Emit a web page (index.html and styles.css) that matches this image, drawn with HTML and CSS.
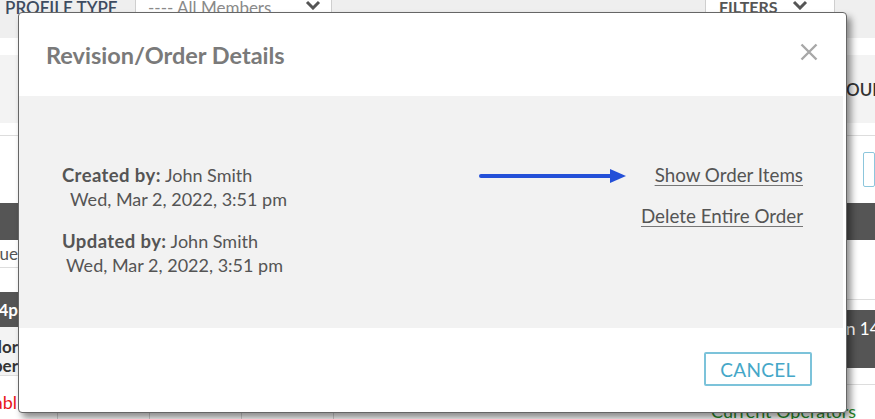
FILE: index.html
```html
<!DOCTYPE html>
<html lang="en">
<head>
    <meta charset="UTF-8">
    <meta name="viewport" content="width=device-width, initial-scale=1.0">
    <title>Revision/Order Details</title>
    <link rel="stylesheet" href="styles.css">
</head>
<body>
    <!-- page behind the dialog -->
    <div class="page">
        <div class="topbar">
            <span class="label">PROFILE TYPE</span>
            <div class="select">
                <span>---- All Members</span>
                <svg class="chev" viewBox="0 0 16 10" width="16" height="10"><path d="M2 2l6 6 6-6" fill="none" stroke="#555" stroke-width="3"/></svg>
            </div>
            <div class="filters">
                <span>FILTERS</span>
                <svg class="chev" viewBox="0 0 16 10" width="16" height="10"><path d="M2 2l6 6 6-6" fill="none" stroke="#555" stroke-width="3"/></svg>
            </div>
        </div>
        <div class="cols">
            <div class="col col-left">
                <div class="row r-gap"></div>
                <div class="row r-grey"></div>
                <div class="row r-thin"></div>
                <div class="row r-tall"></div>
                <div class="row r-dark"></div>
                <div class="row r-text"><span>Queue</span></div>
                <div class="row r-space"></div>
                <div class="row r-dark2"><span>14p</span></div>
                <div class="row r-bold"><span>Vendor</span><span>Oper</span></div>
                <div class="row r-line"></div>
            </div>
            <div class="col col-mid"></div>
            <div class="col col-right">
                <div class="row r-gap"></div>
                <div class="row r-grey r-our"><span>OUR</span></div>
                <div class="row r-thin"></div>
                <div class="row r-tall r-input"><div class="input"></div></div>
                <div class="row r-dark"></div>
                <div class="row r-white"></div>
                <div class="row r-dark3"><span>n 14</span></div>
                <div class="row r-space2"></div>
            </div>
        </div>
        <div class="bottom">
            <div class="cell c-first"><span class="red">Unabl</span></div>
            <div class="cell c-col"></div>
            <div class="cell c-col"></div>
            <div class="cell c-col"></div>
            <div class="cell c-wide"><span class="green">Current Operators</span></div>
        </div>
    </div>

    <div class="modal">
        <div class="modal-header">
            <h2>Revision/Order Details</h2>
            <svg class="close" viewBox="0 0 18 18" width="18" height="18">
                <path d="M1.5 1.5L16.5 16.5M16.5 1.5L1.5 16.5" stroke="#a8a8a8" stroke-width="2.4"/>
            </svg>
        </div>
        <div class="modal-body">
            <div class="meta">
                <p><strong>Created by:</strong> John Smith</p>
                <p class="date">Wed, Mar 2, 2022, 3:51 pm</p>
                <p class="second"><strong>Updated by:</strong> John Smith</p>
                <p class="date date2">Wed, Mar 2, 2022, 3:51 pm</p>
            </div>
            <div class="actions">
                <div class="action-row">
                    <svg class="arrow" viewBox="0 0 148 16" width="148" height="16">
                        <line x1="2" y1="8" x2="134" y2="8" stroke="#2450d8" stroke-width="4" stroke-linecap="round"/>
                        <path d="M131 1L147 8L131 15Z" fill="#2450d8"/>
                    </svg>
                    <a href="#">Show Order Items</a>
                </div>
                <a href="#">Delete Entire Order</a>
            </div>
        </div>
        <div class="modal-footer">
            <button class="btn-cancel">CANCEL</button>
        </div>
    </div>
</body>
</html>
```

FILE: styles.css
```css
* {
    margin: 0;
    padding: 0;
    box-sizing: border-box;
}
body {
    width: 875px;
    height: 419px;
    overflow: hidden;
    position: relative;
    background: #fff;
    font-family: Lato, "Open Sans", sans-serif;
    color: #555;
}

/* background page */
.topbar {
    height: 38px;
    background: #efefef;
    display: flex;
    align-items: flex-start;
}
.topbar .label {
    margin: -3px 0 0 5px;
    font-size: 17px;
    font-weight: 600;
    color: #3d4b60;
    width: 130px;
}
.select {
    width: 197px;
    height: 38px;
    margin-top: -4px;
    background: #fff;
    border: 1px solid #cfcfcf;
    display: flex;
    align-items: flex-start;
    justify-content: space-between;
    padding: 0 10px 0 12px;
    color: #8a8a8a;
    font-size: 17px;
}
.chev { margin-top: 3px; }
.filters {
    margin-left: auto;
    margin-right: 40px;
    width: 130px;
    height: 38px;
    margin-top: -4px;
    background: #fff;
    border: 1px solid #cfcfcf;
    display: flex;
    align-items: flex-start;
    gap: 14px;
    padding-left: 13px;
    font-size: 16px;
    font-weight: 700;
    color: #555;
}
.cols {
    display: flex;
}
.col-left { width: 18px; }
.col-mid { flex: 1; }
.col-right { width: 29px; }
.row {
    display: flex;
    align-items: center;
    white-space: nowrap;
    overflow: hidden;
}
.col-left .row { justify-content: flex-end; }
.r-gap { height: 17px; }
.r-grey { height: 68px; background: #f3f3f3; }
.r-thin { height: 13px; border-bottom: 1px solid #ddd; }
.r-tall { height: 67px; }
.r-dark { height: 37px; background: #555; }
.r-text { height: 28px; font-size: 17px; color: #555; border-bottom: 1px solid #ddd; }
.r-space { height: 24px; }
.r-dark2 { height: 35px; background: #555; color: #fff; font-size: 17px; font-weight: 700; }
.r-bold {
    height: 48px;
    background: #f3f3f3;
    flex-direction: column;
    align-items: flex-end;
    justify-content: center;
    font-size: 17px;
    font-weight: 700;
    color: #333;
    line-height: 19px;
}
.r-line { height: 10px; border-top: 1px solid #ddd; }
.r-our { font-size: 17px; font-weight: 600; color: #333; }
.r-input { align-items: flex-start; padding: 16px 0 0 17px; }
.input {
    width: 30px;
    height: 35px;
    border: 1px solid #8cc6dc;
    border-radius: 2px;
}
.r-white { height: 60px; border-bottom: 1px solid #ddd; }
.r-dark3 { height: 58px; margin-top: 10px; background: #555; color: #fff; font-size: 17px; align-items: flex-start; padding-top: 8px; }
.r-space2 { height: 17px; border-bottom: 1px solid #ddd; }
.bottom {
    height: 34px;
    display: flex;
    white-space: nowrap;
}
.cell {
    height: 100%;
    border-right: 1px solid #d6d6d6;
    overflow: hidden;
    font-size: 18px;
    padding-top: 6px;
}
.c-first {
    width: 58px;
    display: flex;
    justify-content: flex-end;
    padding-right: 40px;
    overflow: hidden;
}
.c-col { width: 92px; }
.c-wide {
    flex: 1;
    border-right: none;
    padding: 15px 0 0 377px;
}
.red { color: #e8141c; }
.green { color: #2a8a2a; }

/* dialog */
.modal {
    position: absolute;
    left: 18px;
    top: 12px;
    width: 829px;
    height: 401px;
    background: #fff;
    border: 1px solid #666;
    border-radius: 4px;
    box-shadow: 4px 5px 7px rgba(0, 0, 0, 0.45);
    display: flex;
    flex-direction: column;
    overflow: hidden;
}
.modal-header {
    height: 83px;
    display: flex;
    align-items: center;
    justify-content: space-between;
    padding: 0 28px 0 27px;
}
.modal-header h2 {
    font-size: 23.5px;
    font-weight: 700;
    color: #7a7a7a;
    margin-top: 1px;
}
.close { margin-top: -6px; }
.modal-body {
    height: 232px;
    background: #f2f2f2;
    margin-right: 3px;
    display: flex;
    justify-content: space-between;
    padding: 67px 40px 0 43px;
}
.meta p {
    font-size: 18px;
    line-height: 24px;
    color: #555;
}
.meta strong { font-weight: 700; font-size: 18.5px; letter-spacing: 0.4px; }
.meta .date { padding-left: 8px; }
.meta .date2 { padding-left: 4px; }
.meta .second { margin-top: 18px; }
.actions {
    display: flex;
    flex-direction: column;
    align-items: flex-end;
    gap: 17px;
}
.action-row {
    display: flex;
    align-items: center;
    gap: 28px;
}
.arrow { margin-top: 2px; }
.actions a {
    font-size: 18.8px;
    line-height: 24px;
    color: #555;
    text-decoration: underline;
    text-underline-offset: 3px;
    text-decoration-color: #777;
}
.modal-footer {
    flex: 1;
    display: flex;
    justify-content: flex-end;
    align-items: flex-start;
    padding: 24px 34px 0 0;
}
.btn-cancel {
    width: 108px;
    height: 34px;
    background: #fff;
    border: 2px solid #7cc3da;
    border-radius: 2px;
    color: #45a7c8;
    font-family: Lato, "Open Sans", sans-serif;
    font-size: 19px;
    letter-spacing: 0.3px;
}
```
